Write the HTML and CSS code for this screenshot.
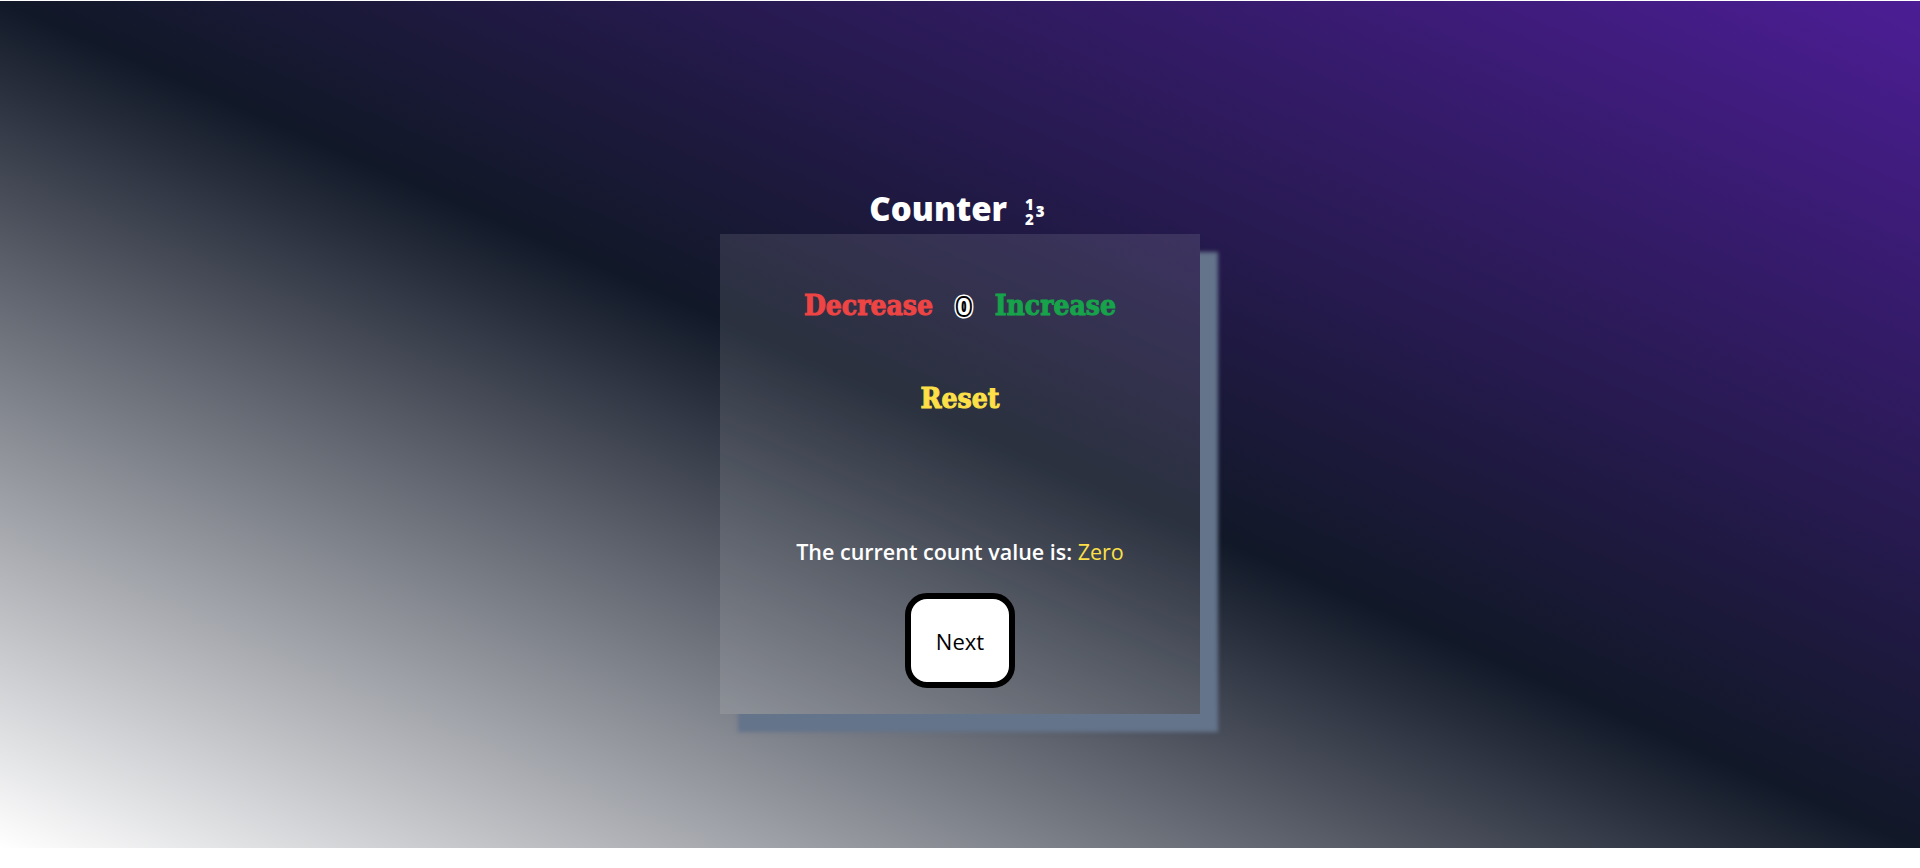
FILE: index.html
```html
<!DOCTYPE html>
<html lang="en">
<head>
<meta charset="utf-8">
<title>Counter</title>
<link rel="stylesheet" href="styles.css">
</head>
<body>
<main class="page">
  <h1 class="title"><span class="title-text">Counter</span><span class="numicon"><span class="frac"><span>1</span><span>2</span></span><span class="three">3</span></span></h1>
  <section class="card">
    <div class="controls">
      <button class="btn btn-dec">Decrease</button>
      <span class="count" data-v="0">0</span>
      <button class="btn btn-inc">Increase</button>
    </div>
    <button class="btn btn-reset">Reset</button>
    <p class="status">The current count value is: <span class="status-value">Zero</span></p>
    <button class="next">Next</button>
  </section>
</main>
</body>
</html>
```

FILE: styles.css
```css
html, body {
  margin: 0;
  padding: 0;
  background: #ffffff;
}

.page {
  margin-top: 1px;
  height: 847px;
  background: linear-gradient(to top right, #ffffff 0%, #111827 50%, #4c1d95 100%);
  display: flex;
  flex-direction: column;
  align-items: center;
  padding-top: 188px;
  box-sizing: border-box;
}

.title {
  margin: 0 0 5px 0;
  font-family: "Open Sans", "Noto Sans", sans-serif;
  font-weight: 800;
  font-size: 33px;
  line-height: 40px;
  color: #ffffff;
  display: flex;
  align-items: center;
  gap: 18px;
  padding-right: 6px;
}

.numicon {
  display: inline-flex;
  align-items: center;
  font-family: "Open Sans", sans-serif;
  font-size: 15px;
  font-weight: 800;
  line-height: 15px;
  gap: 2px;
  margin-top: 6px;
}

.frac {
  display: inline-flex;
  flex-direction: column;
  align-items: center;
}

.three {
  margin-top: -2px;
}

.card {
  width: 480px;
  height: 480px;
  background: rgba(255, 255, 255, 0.11);
  box-shadow: 18px 18px 4px #64748b;
  display: flex;
  flex-direction: column;
  align-items: center;
  box-sizing: border-box;
  padding-top: 56px;
}

.controls {
  display: flex;
  align-items: center;
  gap: 24px;
}

.btn {
  background: none;
  border: none;
  padding: 0;
  cursor: pointer;
  font-family: "DejaVu Serif Condensed", "DejaVu Serif", serif;
  font-weight: 700;
  font-size: 28px;
  line-height: 32px;
  -webkit-text-stroke: 1px currentColor;
}

.btn-dec { color: #ef4444; }
.btn-inc { color: #16a34a; }
.btn-reset {
  color: #fde047;
  margin-top: 61px;
}

.count {
  position: relative;
  z-index: 0;
  font-family: "Open Sans", sans-serif;
  font-weight: 700;
  font-size: 24px;
  line-height: 32px;
  color: #ffffff;
  -webkit-text-stroke: 4px #000000;
  paint-order: stroke fill;
}

.count::before {
  content: attr(data-v);
  position: absolute;
  left: 0;
  top: 0;
  z-index: -1;
  color: #ffffff;
  -webkit-text-stroke: 7px #ffffff;
}

.status {
  margin: 122px 0 0 0;
  font-family: "Open Sans", "Noto Sans", sans-serif;
  font-weight: 600;
  font-size: 21.5px;
  line-height: 30px;
  color: #ffffff;
}

.status-value {
  color: #fde047;
  font-weight: 400;
}

.next {
  margin-top: 26px;
  width: 110px;
  height: 95px;
  box-sizing: border-box;
  border: 6px solid #000000;
  border-radius: 22px;
  background: #ffffff;
  font-family: "Open Sans", "Noto Sans", sans-serif;
  font-size: 22px;
  color: #000000;
  cursor: pointer;
}
```
